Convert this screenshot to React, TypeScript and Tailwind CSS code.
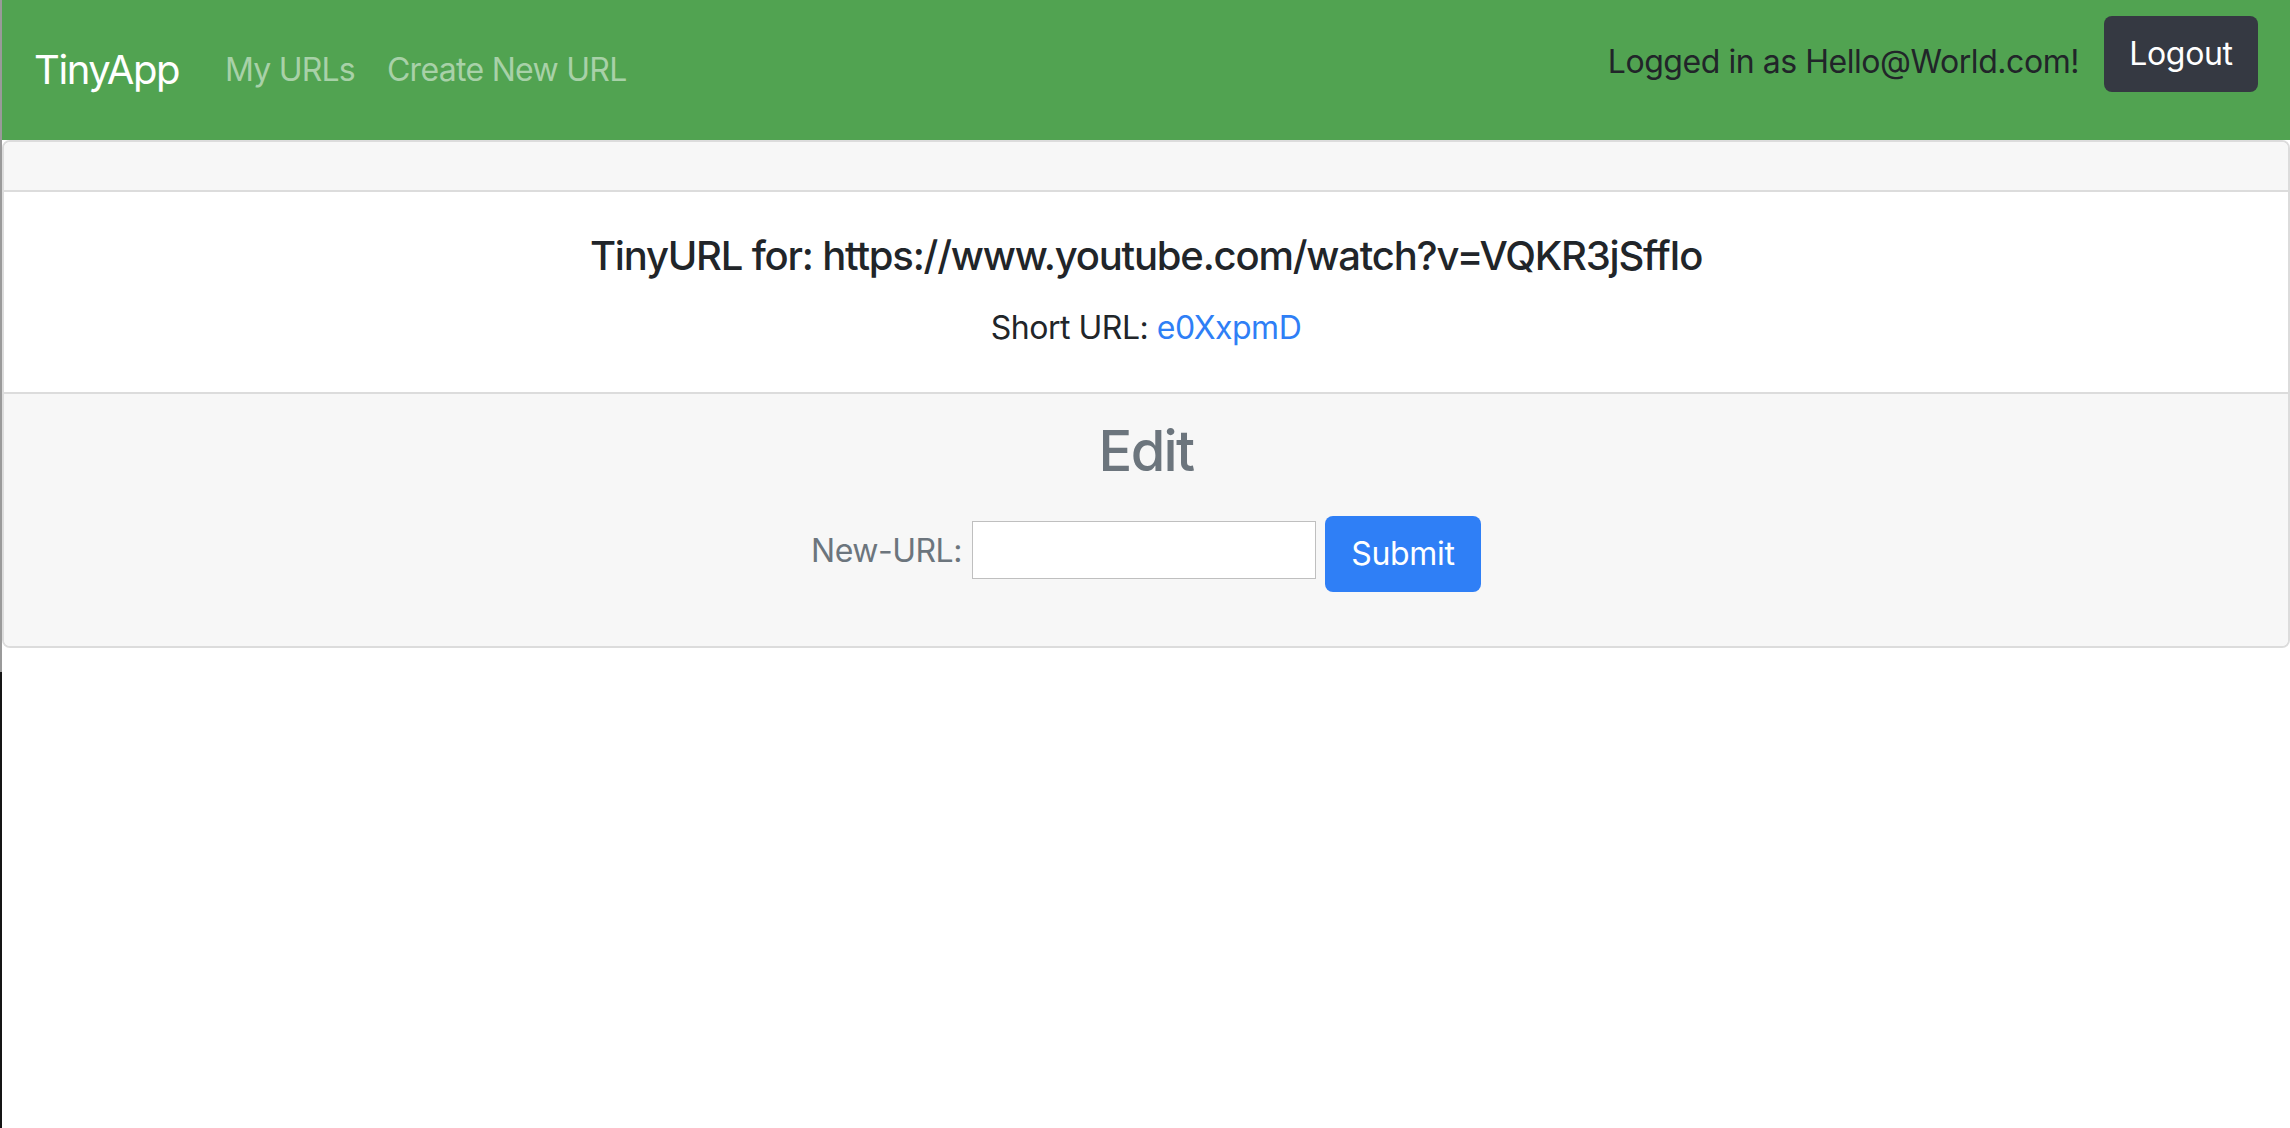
import React from "react";

export default function App() {
  return (
    <div className="flex h-screen w-full bg-white font-['Inter','Liberation_Sans',sans-serif]">
      {/* window edge strip */}
      <div className="flex w-[2px] shrink-0 flex-col">
        <div className="h-[672px] bg-[#9a9a9a]" />
        <div className="flex-1 bg-[#151515]" />
      </div>

      <div className="flex min-w-0 flex-1 flex-col">
        {/* Navbar */}
        <nav className="flex h-[140px] shrink-0 bg-[#51a351] px-[32px]">
          <div className="flex items-center">
            <a className="mr-[46px] text-[40px] leading-[60px] tracking-[-0.035em] text-white">TinyApp</a>
            <a className="mr-[32px] text-[32px] leading-[48px] tracking-[-0.025em] text-[#a8d1a8]">My URLs</a>
            <a className="text-[32px] leading-[48px] tracking-[-0.022em] text-[#a8d1a8]">Create New URL</a>
          </div>
          <div className="ml-auto flex items-start pt-[16px]">
            <span className="mr-[25px] mt-[22px] text-[32px] leading-[48px] tracking-[-0.014em] text-[#212529]">
              Logged in as Hello@World.com!
            </span>
            <button className="flex h-[76px] w-[154px] items-center justify-center rounded-[8px] bg-[#353942] text-[32px] leading-[48px] tracking-[-0.01em] text-white">
              Logout
            </button>
          </div>
        </nav>

        {/* Card */}
        <div className="overflow-hidden rounded-[8px] border-2 border-[#dcdcdc]">
          <div className="h-[50px] border-b-2 border-[#dcdcdc] bg-[#f7f7f7]" />
          <div className="bg-white p-[40px] text-center text-[#212529]">
            <h5 className="mb-[24px] text-[40px] font-medium leading-[48px] tracking-[-0.03em]">
              TinyURL for: https://www.youtube.com/watch?v=VQKR3jSffIo
            </h5>
            <p className="text-[32px] leading-[48px] tracking-[-0.015em]">
              Short URL: <a className="text-[#2f7ff6]">e0XxpmD</a>
            </p>
          </div>
          <div className="border-t-2 border-[#dcdcdc] bg-[#f7f7f7] pb-[54px] pt-[24px] text-center text-[#6c757d]">
            <h3 className="mb-[31px] text-[56px] font-medium leading-[67px] tracking-[-0.03em]">Edit</h3>
            <form className="flex h-[76px] items-start justify-center">
              <label className="mr-[10px] mt-[11px] text-[32px] leading-[48px] tracking-[-0.015em]">New-URL:</label>
              <input
                type="text"
                className="mt-[5px] h-[58px] w-[344px] border border-[#bfbfbf] bg-white outline-none"
              />
              <button
                type="button"
                className="ml-[9px] flex h-[76px] w-[156px] items-center justify-center rounded-[8px] bg-[#2f7ff6] text-[32px] leading-[48px] tracking-[-0.01em] text-white"
              >
                Submit
              </button>
            </form>
          </div>
        </div>
        <div className="flex-1" />
      </div>
    </div>
  );
}
